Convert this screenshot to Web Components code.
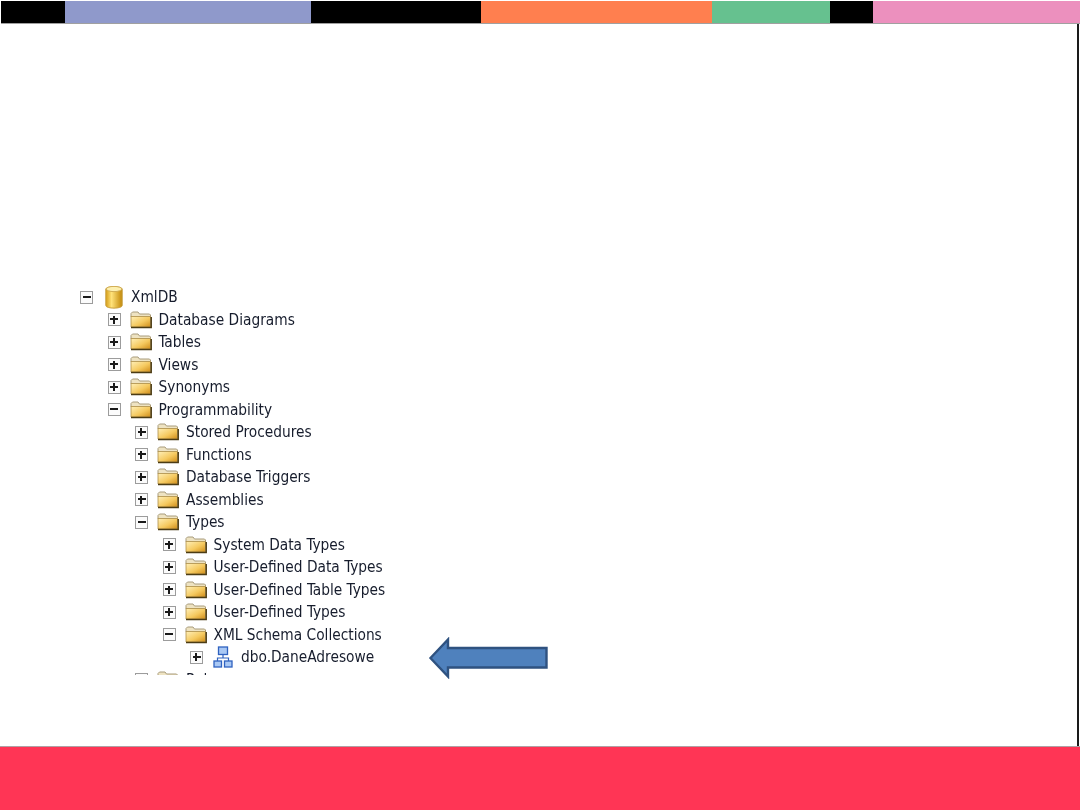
<!DOCTYPE html>
<html>
<head>
<meta charset="utf-8">
<style>
  html, body { margin: 0; padding: 0; background: #fff; }
</style>
</head>
<body>
<slide-frame>
  <color-strip slot="top"></color-strip>
  <object-tree>
    <tree-row level="0" kind="db" state="minus">XmlDB</tree-row>
    <tree-row level="1" state="plus">Database Diagrams</tree-row>
    <tree-row level="1" state="plus">Tables</tree-row>
    <tree-row level="1" state="plus">Views</tree-row>
    <tree-row level="1" state="plus">Synonyms</tree-row>
    <tree-row level="1" state="minus">Programmability</tree-row>
    <tree-row level="2" state="plus">Stored Procedures</tree-row>
    <tree-row level="2" state="plus">Functions</tree-row>
    <tree-row level="2" state="plus">Database Triggers</tree-row>
    <tree-row level="2" state="plus">Assemblies</tree-row>
    <tree-row level="2" state="minus">Types</tree-row>
    <tree-row level="3" state="plus">System Data Types</tree-row>
    <tree-row level="3" state="plus">User-Defined Data Types</tree-row>
    <tree-row level="3" state="plus">User-Defined Table Types</tree-row>
    <tree-row level="3" state="plus">User-Defined Types</tree-row>
    <tree-row level="3" state="minus">XML Schema Collections</tree-row>
    <tree-row level="4" kind="schema" state="plus">dbo.DaneAdresowe</tree-row>
    <tree-row level="2" state="minus">Rules</tree-row>
  </object-tree>
  <block-arrow></block-arrow>
</slide-frame>

<script>
class SlideFrame extends HTMLElement {
  constructor() {
    super();
    this.attachShadow({ mode: "open" });
    this.shadowRoot.innerHTML = `
      <style>
        :host {
          display: flex;
          flex-direction: column;
          width: 1080px;
          height: 810px;
          overflow: hidden;
          position: relative;
          background: #fff;
        }
        .top { flex: none; }
        .body {
          flex: 1;
          border-right: 2px solid #1a1a1a;
          margin-right: 1px;
          padding: 262px 0 0 80px;
          position: relative;
          min-height: 0;
        }
        .foot {
          flex: none;
          height: 63px;
          background: #ff3555;
          border-top: 1px solid #b0a0a4;
        }
      </style>
      <div class="top"><slot name="top"></slot></div>
      <div class="body"><slot></slot></div>
      <div class="foot"></div>
    `;
  }
}

class ColorStrip extends HTMLElement {
  constructor() {
    super();
    this.attachShadow({ mode: "open" });
    this.shadowRoot.innerHTML = `
      <style>
        :host {
          display: flex;
          height: 22px;
          padding: 1px 0 1px 1px;
          background: #fff;
        }
        div { height: 22px; box-shadow: 0 1px 0 #a0a0a0; }
      </style>
      <div style="width:64px;background:#000"></div>
      <div style="width:246px;background:#8f99cb"></div>
      <div style="width:170px;background:#000"></div>
      <div style="width:231px;background:#ff7f4f"></div>
      <div style="width:118px;background:#66c18f"></div>
      <div style="width:43px;background:#000"></div>
      <div style="width:207px;background:#ec90be"></div>
    `;
  }
}

class ObjectTree extends HTMLElement {
  constructor() {
    super();
    this.attachShadow({ mode: "open" });
    this.shadowRoot.innerHTML = `
      <style>
        :host {
          display: block;
          width: 500px;
          height: 389px;
          overflow: hidden;
          font-family: "DejaVu Sans Condensed", "DejaVu Sans", sans-serif;
          font-stretch: condensed;
          font-size: 15.3px;
          color: #161c2c;
        }
        .rows { display: grid; grid-auto-rows: 22.5px; }
      </style>
      <div class="rows"><slot></slot></div>
    `;
  }
}

const FOLDER = `
  <svg width="22" height="18" viewBox="0 0 22 18">
    <defs>
      <linearGradient id="f" x1="0" y1="0" x2="1" y2="1">
        <stop offset="0" stop-color="#fff0b8"/>
        <stop offset=".55" stop-color="#f5c95f"/>
        <stop offset="1" stop-color="#cf8c18"/>
      </linearGradient>
    </defs>
    <path d="M1 5V2.5L2.5 1H8L9.5 3H19.5L20.5 4V6H1Z" fill="#eee3c2" stroke="#a89c7c"/>
    <path d="M1 5.5H20.5V16H1Z" fill="url(#f)" stroke="#b0904a" stroke-width=".8"/>
    <path d="M1 16.6H21.2V6" fill="none" stroke="#4c3c14" stroke-width="1.5"/>
  </svg>`;

const DB = `
  <svg width="18" height="24" viewBox="0 0 18 24">
    <defs>
      <linearGradient id="d" x1="0" y1="0" x2="1" y2="0">
        <stop offset="0" stop-color="#d59c14"/>
        <stop offset=".35" stop-color="#ffe27a"/>
        <stop offset="1" stop-color="#c28808"/>
      </linearGradient>
    </defs>
    <path d="M.8 4C.8 1 17.2 1 17.2 4V20.5C17.2 24 .8 24 .8 20.5Z" fill="url(#d)" stroke="#c9a040"/>
    <ellipse cx="9" cy="4" rx="7.8" ry="2.6" fill="#fdf0b0" stroke="#d2ae55"/>
  </svg>`;

const SCHEMA = `
  <svg width="20" height="22" viewBox="0 0 20 22">
    <path d="M10 8V12M4.5 16V12H15.5V16" fill="none" stroke="#2f62c0" stroke-width="1.2"/>
    <rect x="5.5" y="1" width="9" height="7.5" fill="#a9c8f4" stroke="#2f62c0" stroke-width="1.3"/>
    <rect x="1" y="15" width="7.5" height="6" fill="#a9c8f4" stroke="#2f62c0" stroke-width="1.3"/>
    <rect x="11.5" y="15" width="7.5" height="6" fill="#a9c8f4" stroke="#2f62c0" stroke-width="1.3"/>
  </svg>`;

class TreeRow extends HTMLElement {
  connectedCallback() {
    if (this.shadowRoot) return;
    this.attachShadow({ mode: "open" });
    const level = +this.getAttribute("level");
    const kind = this.getAttribute("kind") || "folder";
    const state = this.getAttribute("state");
    const icon = kind == "db" ? DB : kind == "schema" ? SCHEMA : FOLDER;
    const boxGap = kind == "db" ? 12 : kind == "schema" ? 10 : 9;
    const gap = kind == "db" ? 8 : kind == "schema" ? 8 : 7;
    this.shadowRoot.innerHTML = `
      <style>
        :host {
          display: flex;
          align-items: center;
          height: 22.5px;
          padding-left: ${level * 27.5}px;
          white-space: nowrap;
        }
        .box {
          flex: none;
          box-sizing: border-box;
          width: 13px;
          height: 13px;
          margin-right: ${boxGap}px;
          border: 1.5px solid #9c9c9c;
          background: #fbfbfb;
          position: relative;
        }
        .box::before, .box.plus::after {
          content: "";
          position: absolute;
          background: #1a1a1a;
        }
        .box::before { left: 1.5px; right: 1.5px; top: 4px; height: 2px; }
        .box.plus::after { top: 1.5px; bottom: 1.5px; left: 4px; width: 2px; }
        svg { flex: none; display: block; }
        span { margin-left: ${gap}px; filter: blur(.35px); }
      </style>
      <div class="box ${state}"></div>
      ${icon}
      <span><slot></slot></span>
    `;
  }
}

class BlockArrow extends HTMLElement {
  constructor() {
    super();
    this.attachShadow({ mode: "open" });
    this.shadowRoot.innerHTML = `
      <style>
        :host {
          display: block;
          position: absolute;
          left: 428px;
          top: 613px;
          width: 120px;
          height: 42px;
        }
        svg { display: block; }
      </style>
      <svg width="120" height="42" viewBox="0 0 120 42">
        <path d="M2.5 21L20 2.5V11H118.5V30.5H20V39.5Z" fill="#4f81bd" stroke="#2f5280" stroke-width="2.4"/>
      </svg>
    `;
  }
}

customElements.define("slide-frame", SlideFrame);
customElements.define("color-strip", ColorStrip);
customElements.define("object-tree", ObjectTree);
customElements.define("tree-row", TreeRow);
customElements.define("block-arrow", BlockArrow);
</script>
</body>
</html>
